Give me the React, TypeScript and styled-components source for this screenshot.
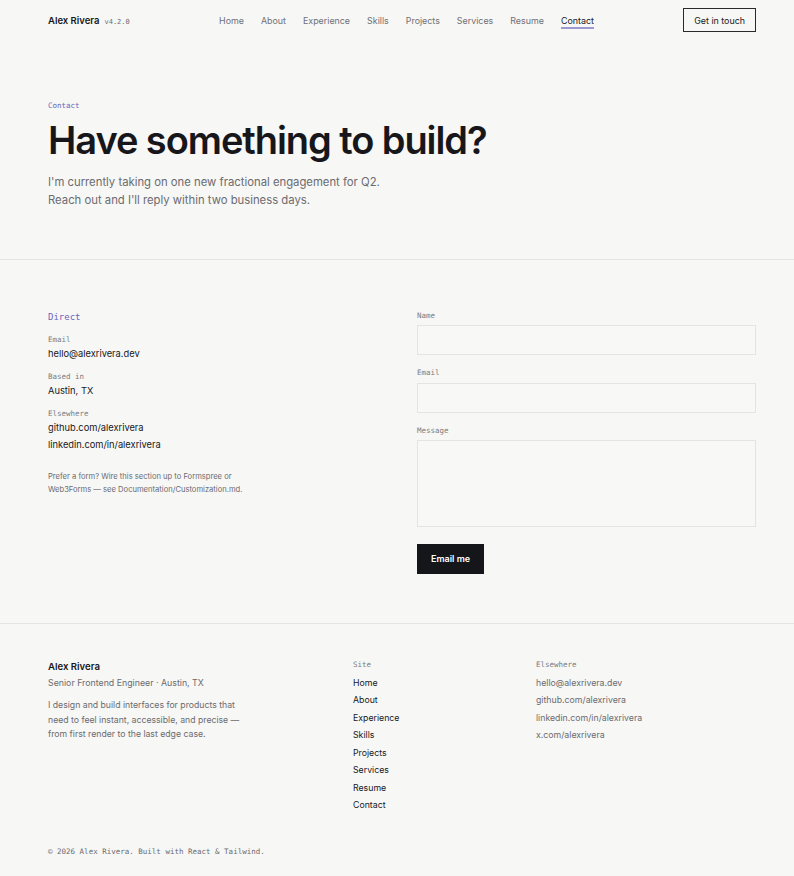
import React from 'react';
import styled, { createGlobalStyle } from 'styled-components';

const GlobalStyle = createGlobalStyle`
	* { box-sizing: border-box; }
	body {
		margin: 0;
		background: #f7f7f5;
		color: #17171b;
		font-family: Inter, 'Noto Sans', sans-serif;
	}
`;

const mono = `'DejaVu Sans Mono', 'Liberation Mono', monospace`;

const Page = styled.div`
	min-height: 876px;
`;

const Inner = styled.div`
	padding: 0 38px 0 48px;
`;

const Header = styled.header`
	height: 40px;
	display: flex;
	align-items: center;
	justify-content: space-between;
	padding: 0 38px 0 48px;
`;

const Brand = styled.div`
	display: flex;
	align-items: baseline;
	gap: 5px;
	font-size: 9.5px;
	font-weight: 600;
`;

const Version = styled.span`
	font-family: ${mono};
	font-size: 7px;
	font-weight: 400;
	color: #6b6b70;
`;

const Nav = styled.nav`
	display: flex;
	gap: 17px;
`;

const NavLink = styled.a<{ $active?: boolean }>`
	font-size: 8.9px;
	color: ${({ $active }) => ($active ? '#17171b' : '#707075')};
	text-decoration: none;
	padding: 3px 0 1px;
	border-bottom: 2px solid ${({ $active }) => ($active ? '#9d98cf' : 'transparent')};
	margin-top: 1px;
`;

const OutlineButton = styled.a`
	font-size: 8.9px;
	color: #17171b;
	border: 1px solid #2a2a2e;
	height: 24px;
	padding: 0 10px;
	display: flex;
	align-items: center;
	text-decoration: none;
`;

const Band = styled.section`
	border-bottom: 1px solid #e4e4e0;
`;

const Hero = styled.div`
	padding: 60px 38px 50px 48px;
`;

const Eyebrow = styled.div`
	font-family: ${mono};
	font-size: 7.5px;
	color: #6a64b8;
	line-height: 11px;
`;

const Title = styled.h1`
	margin: 7px 0 10.5px;
	font-size: 38px;
	font-weight: 600;
	letter-spacing: -0.028em;
	line-height: 44px;
`;

const Lead = styled.p`
	margin: 0;
	font-size: 11.3px;
	line-height: 18px;
	color: #6b6b70;
`;

const ContactGrid = styled.div`
	padding: 50px 38px 49px 48px;
	display: grid;
	grid-template-columns: 1fr 1fr;
	gap: 30px;
`;

const DirectTitle = styled.div`
	font-family: ${mono};
	font-size: 9px;
	color: #6a64b8;
	line-height: 14px;
	margin-bottom: 10px;
`;

const Item = styled.div`
	margin-bottom: 8.5px;
`;

const SmallLabel = styled.div`
	font-family: ${mono};
	font-size: 7.5px;
	color: #7a7a7e;
	line-height: 11px;
	margin-bottom: 0.5px;
`;

const Value = styled.a`
	display: block;
	font-size: 9.3px;
	color: #17171b;
	line-height: 17px;
	text-decoration: none;
`;

const Note = styled.p`
	margin: 18px 0 0;
	font-size: 7.6px;
	line-height: 12.5px;
	color: #6b6b70;
`;

const Form = styled.form`
	display: flex;
	flex-direction: column;
`;

const FieldLabel = styled.label`
	font-family: ${mono};
	font-size: 7.5px;
	color: #7a7a7e;
	line-height: 11px;
	margin-bottom: 4.5px;
`;

const Input = styled.input`
	height: 30px;
	border: 1px solid #e4e4e0;
	background: #f8f8f6;
	margin-bottom: 12px;
	font: inherit;
	outline: none;
`;

const TextArea = styled.textarea`
	height: 87px;
	border: 1px solid #e4e4e0;
	background: #f8f8f6;
	resize: none;
	font: inherit;
	outline: none;
	margin-bottom: 16.5px;
`;

const DarkButton = styled.button`
	align-self: flex-start;
	height: 30px;
	width: 67px;
	background: #15161a;
	color: #fff;
	border: none;
	font-family: Inter, sans-serif;
	font-size: 9px;
	font-weight: 600;
`;

const Footer = styled.footer`
	padding: 35px 0 0;
`;

const FooterGrid = styled.div`
	display: grid;
	grid-template-columns: 305px 183px 1fr;
`;

const FooterName = styled.div`
	font-size: 9.6px;
	font-weight: 600;
	line-height: 15px;
`;

const FooterRole = styled.div`
	font-size: 8.8px;
	color: #6b6b70;
	line-height: 15px;
	margin-top: 1px;
`;

const FooterBio = styled.p`
	margin: 8.5px 0 0;
	font-size: 8.7px;
	line-height: 14.5px;
	color: #6b6b70;
	max-width: 200px;
`;

const ColTitle = styled.div`
	font-family: ${mono};
	font-size: 7.5px;
	color: #7a7a7e;
	line-height: 11px;
	margin-bottom: 5px;
`;

const LinkList = styled.ul`
	list-style: none;
	margin: 0;
	padding: 0;
`;

const FooterLink = styled.li<{ $muted?: boolean }>`
	font-size: 8.75px;
	line-height: 17.5px;
	color: ${({ $muted }) => ($muted ? '#6b6b70' : '#17171b')};
`;

const Copyright = styled.div`
	margin-top: 31px;
	font-family: ${mono};
	font-size: 7.5px;
	color: #6b6b70;
	line-height: 11px;
`;

const navItems = ['Home', 'About', 'Experience', 'Skills', 'Projects', 'Services', 'Resume', 'Contact'];
const elsewhere = ['hello@alexrivera.dev', 'github.com/alexrivera', 'linkedin.com/in/alexrivera', 'x.com/alexrivera'];

const App: React.FC = () => {
	return (
		<Page>
			<GlobalStyle />
			<Header>
				<Brand>
					Alex Rivera <Version>v4.2.0</Version>
				</Brand>
				<Nav>
					{navItems.map((item) => (
						<NavLink key={item} $active={item === 'Contact'}>
							{item}
						</NavLink>
					))}
				</Nav>
				<OutlineButton>Get in touch</OutlineButton>
			</Header>
			<Band>
				<Hero>
					<Eyebrow>Contact</Eyebrow>
					<Title>Have something to build?</Title>
					<Lead>
						I'm currently taking on one new fractional engagement for Q2.
						<br />
						Reach out and I'll reply within two business days.
					</Lead>
				</Hero>
			</Band>
			<Band>
				<ContactGrid>
					<div>
						<DirectTitle>Direct</DirectTitle>
						<Item>
							<SmallLabel>Email</SmallLabel>
							<Value>hello@alexrivera.dev</Value>
						</Item>
						<Item>
							<SmallLabel>Based in</SmallLabel>
							<Value>Austin, TX</Value>
						</Item>
						<Item>
							<SmallLabel>Elsewhere</SmallLabel>
							<Value>github.com/alexrivera</Value>
							<Value>linkedin.com/in/alexrivera</Value>
						</Item>
						<Note>
							Prefer a form? Wire this section up to Formspree or
							<br />
							Web3Forms — see Documentation/Customization.md.
						</Note>
					</div>
					<Form onSubmit={(e) => e.preventDefault()}>
						<FieldLabel>Name</FieldLabel>
						<Input />
						<FieldLabel>Email</FieldLabel>
						<Input />
						<FieldLabel>Message</FieldLabel>
						<TextArea />
						<DarkButton type="submit">Email me</DarkButton>
					</Form>
				</ContactGrid>
			</Band>
			<Inner>
				<Footer>
					<FooterGrid>
						<div>
							<FooterName>Alex Rivera</FooterName>
							<FooterRole>Senior Frontend Engineer · Austin, TX</FooterRole>
							<FooterBio>
								I design and build interfaces for products that need to feel instant, accessible, and precise — from first render to the last edge case.
							</FooterBio>
						</div>
						<div>
							<ColTitle>Site</ColTitle>
							<LinkList>
								{navItems.map((item) => (
									<FooterLink key={item}>{item}</FooterLink>
								))}
							</LinkList>
						</div>
						<div>
							<ColTitle>Elsewhere</ColTitle>
							<LinkList>
								{elsewhere.map((item) => (
									<FooterLink key={item} $muted>
										{item}
									</FooterLink>
								))}
							</LinkList>
						</div>
					</FooterGrid>
					<Copyright>© 2026 Alex Rivera. Built with React &amp; Tailwind.</Copyright>
				</Footer>
			</Inner>
		</Page>
	);
};

export default App;
